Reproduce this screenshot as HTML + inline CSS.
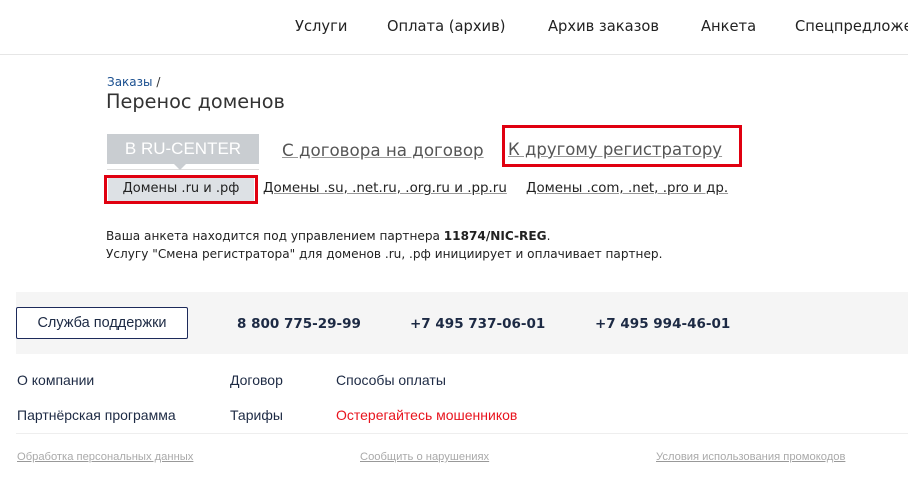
<!DOCTYPE html>
<html><head><meta charset="utf-8"><style>
*{margin:0;padding:0;box-sizing:border-box}
body{width:908px;height:477px;overflow:hidden;background:#fff;font-family:"DejaVu Sans","Liberation Sans",sans-serif;color:#222;position:relative}
.a{position:absolute;white-space:nowrap}
.nav{font-size:15px;color:#222;top:18px}
.u{text-decoration:underline;text-decoration-color:#999}
.red{border:3px solid #e00010;position:absolute}
.f{font-family:"Liberation Sans",sans-serif;font-size:14px;color:#1d2a44}
</style></head><body>
<div class="a nav" style="left:295px;font-size:14.7px">Услуги</div>
<div class="a nav" style="left:387px;font-size:14.7px">Оплата (архив)</div>
<div class="a nav" style="left:548px;font-size:14.7px">Архив заказов</div>
<div class="a nav" style="left:701px;font-size:14.7px">Анкета</div>
<div class="a nav" style="left:795px;font-size:14.7px">Спецпредложения</div>
<div class="a" style="left:0;top:54px;width:908px;height:1px;background:#e6e6e6"></div>

<div class="a" style="left:107px;top:75px;font-size:12px;color:#1a4f8f">Заказы <span style="color:#333">/</span></div>
<div class="a" style="left:106px;top:90px;font-size:19.3px;color:#333">Перенос доменов</div>

<div class="a" style="left:107px;top:134px;width:152px;height:30px;background:#c9cdd1;color:#fff;text-align:center;line-height:30px;font-family:'Liberation Sans',sans-serif;font-size:17px">В RU-CENTER</div>
<div class="a" style="left:107px;top:169px;width:152px;height:1px;background:#ddd"></div>
<div class="a" style="left:174px;top:164px;width:0;height:0;border-left:6px solid transparent;border-right:6px solid transparent;border-top:6px solid #c9cdd1"></div>
<div class="a u" style="left:282px;top:140px;font-size:16.7px;color:#555">С договора на договор</div>
<div class="a u" style="left:508px;top:140px;font-size:16.5px;color:#555">К другому регистратору</div>
<div class="red" style="left:502px;top:125px;width:240px;height:42px"></div>

<div class="a" style="left:108px;top:178px;width:146px;height:24px;background:#dde1e5;font-size:13px;line-height:22px;text-align:center;color:#222">Домены .ru и .рф</div>
<div class="red" style="left:104px;top:175px;width:154px;height:29px"></div>
<div class="a u" style="left:263px;top:181px;font-size:13.45px;color:#222">Домены .su, .net.ru, .org.ru и .pp.ru</div>
<div class="a u" style="left:526px;top:181px;font-size:13.4px;color:#222">Домены .com, .net, .pro и др.</div>

<div class="a" style="left:106px;top:229px;font-size:12.1px;color:#222">Ваша анкета находится под управлением партнера <b>11874/NIC-REG</b>.</div>
<div class="a" style="left:106px;top:247px;font-size:12.1px;color:#222">Услугу "Смена регистратора" для доменов .ru, .рф инициирует и оплачивает партнер.</div>

<div class="a" style="left:16px;top:292px;width:892px;height:62px;background:#f5f5f5"></div>
<div class="a f" style="left:16px;top:307px;width:172px;height:32px;border:1px solid #1d2a5a;border-radius:2px;background:#fff;text-align:center;line-height:30px;font-size:14.5px">Служба поддержки</div>
<div class="a" style="left:237px;top:316px;font-size:13.5px;font-weight:bold;color:#1d2a44">8 800 775-29-99</div>
<div class="a" style="left:410px;top:316px;font-size:13.5px;font-weight:bold;color:#1d2a44">+7 495 737-06-01</div>
<div class="a" style="left:595px;top:316px;font-size:13.5px;font-weight:bold;color:#1d2a44">+7 495 994-46-01</div>

<div class="a f" style="left:17px;top:372px">О компании</div>
<div class="a f" style="left:230px;top:372px">Договор</div>
<div class="a f" style="left:336px;top:372px">Способы оплаты</div>
<div class="a f" style="left:17px;top:407px">Партнёрская программа</div>
<div class="a f" style="left:230px;top:407px">Тарифы</div>
<div class="a f" style="left:336px;top:407px;color:#e8141e">Остерегайтесь мошенников</div>
<div class="a" style="left:16px;top:433px;width:892px;height:1px;background:#eee"></div>
<div class="a u" style="left:17px;top:451px;font-family:'Liberation Sans',sans-serif;font-size:11.2px;color:#aaa">Обработка персональных данных</div>
<div class="a u" style="left:360px;top:451px;font-family:'Liberation Sans',sans-serif;font-size:11.2px;color:#aaa">Сообщить о нарушениях</div>
<div class="a u" style="left:656px;top:451px;font-family:'Liberation Sans',sans-serif;font-size:11.2px;color:#aaa">Условия использования промокодов</div>
</body></html>
